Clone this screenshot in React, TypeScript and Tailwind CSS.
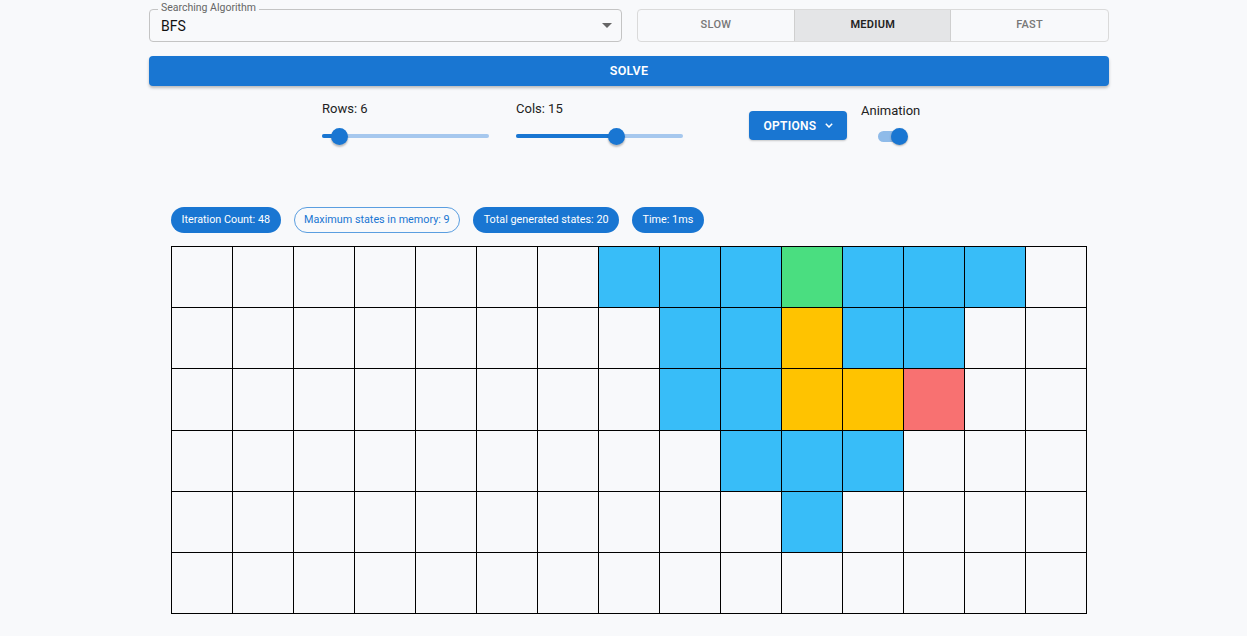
import React from "react";

// cell states: 0 empty, 1 visited, 2 start, 3 path, 4 goal
const grid: number[][] = [
  [0, 0, 0, 0, 0, 0, 0, 1, 1, 1, 2, 1, 1, 1, 0],
  [0, 0, 0, 0, 0, 0, 0, 0, 1, 1, 3, 1, 1, 0, 0],
  [0, 0, 0, 0, 0, 0, 0, 0, 1, 1, 3, 3, 4, 0, 0],
  [0, 0, 0, 0, 0, 0, 0, 0, 0, 1, 1, 1, 0, 0, 0],
  [0, 0, 0, 0, 0, 0, 0, 0, 0, 0, 1, 0, 0, 0, 0],
  [0, 0, 0, 0, 0, 0, 0, 0, 0, 0, 0, 0, 0, 0, 0],
];

const cellColor = (v: number) => {
  if (v === 1) return "bg-[#38bdf8]";
  if (v === 2) return "bg-[#4ade80]";
  if (v === 3) return "bg-[#ffc300]";
  if (v === 4) return "bg-[#f87171]";
  return "bg-transparent";
};

const Slider = ({ label, pct }: { label: string; pct: number }) => (
  <div className="w-[167px]">
    <div className="text-[13px] text-[#222] leading-none mt-[2px]">{label}</div>
    <div className="relative h-4 mt-[13px]">
      <div className="absolute left-0 right-0 top-[6px] h-1 rounded-full bg-[#a6c8ee]" />
      <div
        className="absolute left-0 top-[6px] h-1 rounded-full bg-[#1976d2]"
        style={{ width: `${pct}%` }}
      />
      <div
        className="absolute top-0 w-[17px] h-[17px] -ml-[8px] rounded-full bg-[#1976d2] shadow-[0_2px_2px_rgba(0,0,0,0.25)]"
        style={{ left: `${pct}%` }}
      />
    </div>
  </div>
);

const Chip = ({ text, outlined }: { text: string; outlined?: boolean }) => (
  <div
    className={
      outlined
        ? "h-[26px] px-[9.5px] flex items-center rounded-full border border-[#5a9ee0] text-[#1976d2] text-[10.8px]"
        : "h-[26px] px-[10.5px] flex items-center rounded-full bg-[#1976d2] text-white text-[10.8px]"
    }
  >
    {text}
  </div>
);

export default function App() {
  return (
    <div
      className="min-h-screen bg-[#f8f9fb] pl-[11px]"
      style={{ fontFamily: "Roboto, 'Liberation Sans', sans-serif" }}
    >
      <div className="w-[960px] mx-auto pt-[9px]">
        {/* top controls */}
        <div className="grid grid-cols-2 gap-[15px]">
          <div className="relative h-[33px] border border-[#c4c4c4] rounded-[4px] flex items-center px-[11px]">
            <span className="absolute -top-[7px] left-[8px] px-[3px] bg-[#f8f9fb] text-[10.5px] text-[#666] leading-none">
              Searching Algorithm
            </span>
            <span className="text-[14px] text-[#111] mt-[1px]">BFS</span>
            <svg className="ml-auto -mr-[2px]" width="10" height="5" viewBox="0 0 10 5">
              <path d="M0 0 L10 0 L5 5 Z" fill="#666" />
            </svg>
          </div>
          <div className="h-[33px] grid grid-cols-3 border border-[#dadada] rounded-[4px] overflow-hidden">
            <div className="flex items-center justify-center text-[11px] font-medium text-[#777] tracking-wide">
              SLOW
            </div>
            <div className="flex items-center justify-center text-[11px] font-semibold text-[#222] tracking-wide bg-[#e4e5e7] border-x border-[#cfcfcf]">
              MEDIUM
            </div>
            <div className="flex items-center justify-center text-[11px] font-medium text-[#777] tracking-wide">
              FAST
            </div>
          </div>
        </div>

        <button className="mt-[14px] w-full h-[30px] rounded-[4px] bg-[#1976d2] text-white text-[12.5px] font-semibold tracking-wide shadow-[0_2px_3px_rgba(0,0,0,0.25)]">
          SOLVE
        </button>

        {/* sliders & options */}
        <div className="flex items-start mt-[14px] pl-[173px]">
          <Slider label="Rows: 6" pct={10.2} />
          <div className="w-[27px]" />
          <Slider label="Cols: 15" pct={59.6} />
          <button className="ml-[66px] mt-[11px] h-[29px] w-[98px] rounded-[4px] bg-[#1976d2] text-white text-[12px] font-semibold tracking-wide flex items-center justify-center gap-[8px] shadow-[0_1px_2px_rgba(0,0,0,0.2)]">
            OPTIONS
            <svg width="8" height="5" viewBox="0 0 8 5" fill="none">
              <path d="M0.8 0.8 L4 4 L7.2 0.8" stroke="white" strokeWidth="1.5" />
            </svg>
          </button>
          <div className="ml-[14px] flex flex-col items-center">
            <div className="text-[13px] text-[#222] leading-none mt-[4px]">Animation</div>
            <div className="relative w-[30px] h-[17px] mt-[11px] ml-[4px]">
              <div className="absolute left-0 right-[3px] top-[3px] h-[11px] rounded-full bg-[#8fbbe9]" />
              <div className="absolute right-0 top-0 w-[17px] h-[17px] rounded-full bg-[#1976d2] shadow-[0_1px_2px_rgba(0,0,0,0.3)]" />
            </div>
          </div>
        </div>

        {/* stats */}
        <div className="flex gap-[13px] mt-[62px] pl-[22px]">
          <Chip text="Iteration Count: 48" />
          <Chip text="Maximum states in memory: 9" outlined />
          <Chip text="Total generated states: 20" />
          <Chip text="Time: 1ms" />
        </div>

        {/* grid */}
        <div className="ml-[22px] mt-[13px] w-[916px] border-l border-t border-black grid grid-cols-[repeat(15,61px)]">
          {grid.flat().map((v, i) => (
            <div key={i} className={`h-[61.2px] border-r border-b border-black ${cellColor(v)}`} />
          ))}
        </div>
      </div>
    </div>
  );
}
